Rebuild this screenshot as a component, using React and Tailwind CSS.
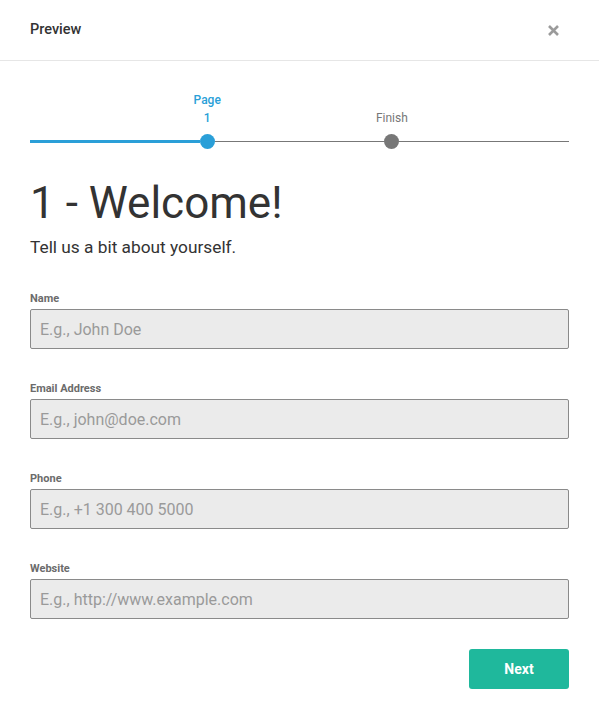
import React from 'react';

const fields = [
  { label: 'Name', placeholder: 'E.g., John Doe', type: 'text' },
  { label: 'Email Address', placeholder: 'E.g., john@doe.com', type: 'email' },
  { label: 'Phone', placeholder: 'E.g., +1 300 400 5000', type: 'tel' },
  { label: 'Website', placeholder: 'E.g., http://www.example.com', type: 'url' },
];

function StepLabel({ children, className }) {
  return (
    <div className={`flex w-[15px] justify-center whitespace-nowrap text-center ${className}`}>
      <div>{children}</div>
    </div>
  );
}

export default function App() {
  return (
    <div className="min-h-[712px] w-[599px] bg-white text-[#333] font-['Roboto','Liberation_Sans',sans-serif]">
      <div className="flex h-[61px] items-center justify-between border-b border-[#e6e6e6] pl-[30px] pr-[40px]">
        <h1 className="text-[14.5px] font-medium leading-none text-[#333]">Preview</h1>
        <button type="button" className="flex h-[11px] w-[11px] items-center justify-center">
          <svg width="11" height="11" viewBox="0 0 11 11">
            <path d="M1 1 10 10M10 1 1 10" stroke="#9b9b9b" strokeWidth="2.6" />
          </svg>
        </button>
      </div>

      <div className="px-[30px] pt-[30px]">
        {/* progress */}
        <div className="flex items-end text-[12px] leading-[18px]">
          <div className="flex-1" />
          <StepLabel className="font-medium text-[#2a9fd8]">
            Page
            <br />1
          </StepLabel>
          <div className="flex-1" />
          <StepLabel className="text-[#777]">Finish</StepLabel>
          <div className="flex-1" />
        </div>
        <div className="mt-[7px] flex h-[15px] items-center">
          <div className="h-[3px] flex-1 bg-[#2a9fd8]" />
          <div className="h-[15px] w-[15px] rounded-full bg-[#2a9fd8]" />
          <div className="h-px flex-1 bg-[#777]" />
          <div className="h-[15px] w-[15px] rounded-full bg-[#777]" />
          <div className="h-px flex-1 bg-[#777]" />
        </div>

        <h2 className="mt-[28px] text-[44px] font-normal leading-[52px] text-[#333]">1 - Welcome!</h2>
        <p className="mt-[6px] text-[17.3px] leading-[24px] text-[#333]">Tell us a bit about yourself.</p>

        <form className="mt-[32px] flex flex-col gap-[32px]">
          {fields.map((f) => (
            <div key={f.label}>
              <label className="mb-[2px] block text-[11px] font-bold leading-[16px] text-[#6b6b6b]">{f.label}</label>
              <input
                type={f.type}
                placeholder={f.placeholder}
                className="block h-[40px] w-full rounded-[2px] border border-[#8a8a8a] bg-[#ebebeb] px-[9px] text-[16px] text-[#333] placeholder:text-[#9a9a9a] focus:outline-none"
              />
            </div>
          ))}
          <div className="-mt-[2px] flex justify-end">
            <button
              type="button"
              className="h-[40px] w-[100px] rounded-[3px] bg-[#1fb89c] text-[14px] font-bold text-white"
            >
              Next
            </button>
          </div>
        </form>
      </div>
    </div>
  );
}
